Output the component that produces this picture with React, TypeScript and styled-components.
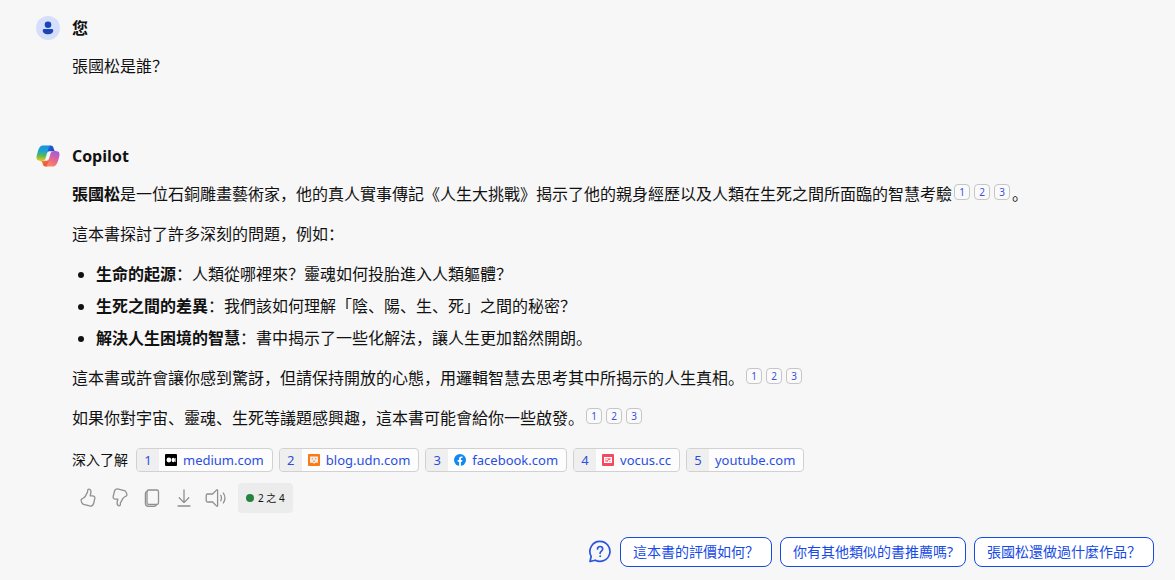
import React from "react";
import styled, { createGlobalStyle } from "styled-components";

const GlobalStyle = createGlobalStyle`
  * { box-sizing: border-box; }
  body {
    margin: 0;
    background: #f7f7f7;
    color: #111;
    font-family: "Noto Sans", "Noto Sans CJK SC", sans-serif;
    font-size: 16px;
    line-height: 24px;
  }
`;

const Page = styled.main`
  padding: 16px 21px 13px 36px;
`;

const Message = styled.article`
  & + & { margin-top: 66px; }
`;

const Author = styled.header`
  display: flex;
  align-items: center;
  gap: 12px;
  height: 24px;
  margin-bottom: 14px;
`;

const AuthorName = styled.h2`
  margin: 0;
  font-family: "Open Sans", "Noto Sans CJK SC", sans-serif;
  font-size: 16px;
  font-weight: 700;
  line-height: 24px;
`;

const Body = styled.div`
  padding-left: 36px;
`;

const Paragraph = styled.p`
  margin: 0 0 16px;
  &:last-child { margin-bottom: 0; }
`;

const List = styled.ul`
  display: flex;
  flex-direction: column;
  gap: 8px;
  margin: 0 0 16px;
  padding-left: 24px;
`;

const CiteGroup = styled.span`
  display: inline-flex;
  gap: 4px;
  height: 16px;
  margin: 0 2px;
  vertical-align: 4px;
`;

const Cite = styled.a`
  display: flex;
  align-items: center;
  justify-content: center;
  width: 16px;
  height: 16px;
  border: 1px solid #c6c6c6;
  border-radius: 4px;
  background: #fafafa;
  color: #3a4fe4;
  font-size: 10px;
  line-height: 14px;
  text-decoration: none;
`;

const Sources = styled.nav`
  display: flex;
  flex-wrap: wrap;
  align-items: center;
  gap: 6px;
  margin-top: 18px;
`;

const SourcesLabel = styled.span`
  margin-right: 2px;
  font-size: 14px;
`;

const Source = styled.a`
  display: flex;
  align-items: stretch;
  height: 24px;
  overflow: hidden;
  border: 1px solid #d1d1d1;
  border-radius: 4px;
  background: #fdfdfd;
  color: #2a4fe0;
  font-size: 13px;
  line-height: 22px;
  text-decoration: none;
`;

const SourceIndex = styled.span`
  width: 22px;
  background: #efefef;
  text-align: center;
`;

const SourceSite = styled.span`
  display: flex;
  align-items: center;
  gap: 6px;
  padding: 0 8px 0 6px;
`;

const Actions = styled.div`
  display: flex;
  align-items: center;
  margin-top: 11px;
`;

const IconButton = styled.button`
  display: flex;
  align-items: center;
  justify-content: center;
  width: 32px;
  height: 30px;
  padding: 0;
  border: 0;
  background: none;
  color: #909090;
`;

const Counter = styled.span`
  display: flex;
  align-items: center;
  gap: 4px;
  height: 30px;
  margin-left: 6px;
  padding: 0 8px;
  border-radius: 4px;
  background: #ececec;
  font-size: 10px;
`;

const Dot = styled.span`
  width: 8px;
  height: 8px;
  border-radius: 50%;
  background: #24833f;
`;

const Suggestions = styled.footer`
  display: flex;
  flex-wrap: wrap;
  align-items: center;
  justify-content: flex-end;
  gap: 8px;
  margin-top: 24px;
`;

const Suggestion = styled.button`
  height: 30px;
  padding: 0 12px;
  border: 1px solid #174ae4;
  border-radius: 8px;
  background: #fff;
  color: #174ae4;
  font: inherit;
  font-size: 14px;
  line-height: 28px;
`;

const UserAvatar = () => (
  <svg width="24" height="24" viewBox="0 0 24 24" aria-hidden="true">
    <circle cx="12" cy="12" r="12" fill="#d5dffb" />
    <circle cx="12" cy="8.700" r="3.300" fill="#1b44b8" />
    <path d="M8.300 13h7.400c.9 0 1.600.7 1.600 1.600 0 2.400-2.400 3.700-5.300 3.700s-5.300-1.300-5.300-3.700c0-.9.7-1.600 1.600-1.600z" fill="#1b44b8" />
  </svg>
);

const CopilotLogo = () => (
  <svg width="24" height="24" viewBox="1 1 46 46" aria-hidden="true">
    <defs>
      <linearGradient id="cpLeft" x1="14" y1="4" x2="12" y2="33" gradientUnits="userSpaceOnUse">
        <stop offset="0" stopColor="#1a8fe8" />
        <stop offset=".4" stopColor="#1fa6c4" />
        <stop offset=".68" stopColor="#5cb955" />
        <stop offset="1" stopColor="#eac91c" />
      </linearGradient>
      <linearGradient id="cpTop" x1="24" y1="6" x2="36" y2="15" gradientUnits="userSpaceOnUse">
        <stop offset="0" stopColor="#1b69e0" />
        <stop offset="1" stopColor="#263fbd" />
      </linearGradient>
      <linearGradient id="cpRight" x1="40" y1="14" x2="28" y2="45" gradientUnits="userSpaceOnUse">
        <stop offset="0" stopColor="#9b5be8" />
        <stop offset=".45" stopColor="#dc609e" />
        <stop offset="1" stopColor="#ff8b58" />
      </linearGradient>
      <linearGradient id="cpBottom" x1="14" y1="33" x2="22" y2="44" gradientUnits="userSpaceOnUse">
        <stop offset="0" stopColor="#f08038" />
        <stop offset="1" stopColor="#e94742" />
      </linearGradient>
    </defs>
    <path d="M34.142 7.325A4.630 4.630 0 0 0 29.700 4h-1.350a4.630 4.630 0 0 0-4.554 3.794L21.480 20.407l.575-1.965a4.630 4.630 0 0 1 4.444-3.330h7.853l3.294 1.282 3.175-1.283h-.926a4.630 4.630 0 0 1-4.443-3.325z" fill="url(#cpTop)" />
    <path d="M14.330 40.656A4.630 4.630 0 0 0 18.779 44h2.870a4.630 4.630 0 0 0 4.629-4.510l.312-12.163-.654 2.233a4.630 4.630 0 0 1-4.443 3.329h-7.919l-2.823-1.532-3.057 1.532h.912a4.630 4.630 0 0 1 4.447 3.344z" fill="url(#cpBottom)" />
    <path d="M29.500 4H13.460c-4.583 0-7.332 6.057-9.165 12.113C2.123 23.290-.720 32.885 7.503 32.885h6.925a4.630 4.630 0 0 0 4.456-3.358 2078 2078 0 0 1 4.971-17.156c.843-2.843 1.544-5.284 2.621-6.805C27.080 4.714 28.086 4 29.500 4z" fill="url(#cpLeft)" />
    <path d="M18.498 44h16.040c4.582 0 7.332-6.058 9.165-12.115 2.171-7.177 5.013-16.775-3.208-16.775h-6.926a4.630 4.630 0 0 0-4.455 3.358 2084 2084 0 0 1-4.972 17.160c-.842 2.842-1.544 5.285-2.620 6.806-.604.852-1.610 1.566-3.024 1.566z" fill="url(#cpRight)" />
  </svg>
);

const lineIcon = {
  width: 22,
  height: 22,
  viewBox: "0 0 22 22",
  fill: "none",
  stroke: "currentColor",
  strokeWidth: 1.3,
  strokeLinecap: "round" as const,
  strokeLinejoin: "round" as const,
  "aria-hidden": true,
};

const thumbPath =
  "M11.900 2.200c1.600.3 2.300 1.700 2 3.300L13.200 8.800h2.300c1.700 0 2.700 1.300 2.300 2.900l-1.200 4.800c-.5 1.900-2.100 2.900-4 2.400l-6-1.600c-.9-.3-1.500-.9-1.800-1.800l-.6-1.300c-.4-1 0-2 1-2.500l1.300-.7c.9-.5 1.500-1.200 2-2.100l2-3.800c.2-.6.1-1.300.2-1.900.1-.7.6-1.100 1.200-1z";

const LikeIcon = () => (
  <svg {...lineIcon}><path d={thumbPath} /></svg>
);

const DislikeIcon = () => (
  <svg {...lineIcon}><path transform="rotate(180 11 10.500)" d={thumbPath} /></svg>
);

const CopyIcon = () => (
  <svg {...lineIcon}>
    <rect x="6" y="3" width="11.500" height="14.500" rx="1.800" />
    <path d="M6 4.300c-1 .3-1.600 1.100-1.600 2.200v9.700c0 1.900 1.200 3.100 3.100 3.100h5.800c1 0 1.700-.5 2.100-1.500" />
  </svg>
);

const DownloadIcon = () => (
  <svg {...lineIcon}><path d="M11 3v12.500M6.200 10.800 11 15.600l4.800-4.800M5 19h12" /></svg>
);

const SpeakerIcon = () => (
  <svg {...lineIcon}>
    <path d="M12.600 3.300v15.400c0 .5-.5.700-.9.400L7.600 15H2.700c-.9 0-1.500-.6-1.500-1.500v-5C1.200 7.600 1.800 7 2.700 7h4.900l4.100-4.100c.4-.3.900-.1.900.4zM15.700 8.300c.9 1.600.9 3.800 0 5.400M18.300 6c2 3 2 7 0 10" />
  </svg>
);

const HelpChatIcon = () => (
  <svg width="24" height="24" viewBox="0 0 24 24" fill="none" stroke="#2a55dd" strokeWidth="1.700" strokeLinecap="round" strokeLinejoin="round" aria-hidden="true">
    <path d="M12 1.400a10 10 0 1 1-4.800 18.800l-5.200 1.300 1.200-5.200A10 10 0 0 1 12 1.400z" />
    <path d="M9.500 9c0-1.500 1.100-2.500 2.600-2.500s2.600 1 2.600 2.500c0 2-2.600 2.200-2.600 4.300" />
    <circle cx="12.100" cy="16.200" r=".5" fill="#2a55dd" strokeWidth="1" />
  </svg>
);

const MediumIcon = () => (
  <svg width="12" height="12" viewBox="0 0 12 12" aria-hidden="true">
    <rect width="12" height="12" rx="1" fill="#000" />
    <circle cx="3.900" cy="6" r="2.400" fill="#fff" />
    <ellipse cx="8.300" cy="6" rx="1.700" ry="2.300" fill="#fff" />
    <rect x="10.400" y="4" width=".6" height="4" fill="#fff" />
  </svg>
);

const UdnIcon = () => (
  <svg width="12" height="12" viewBox="0 0 12 12" aria-hidden="true">
    <rect width="12" height="12" rx="1" fill="#fa7a14" />
    <path d="M2 2.500h8v6.300H7.300L6 9.800 4.700 8.800H2z" fill="#f6ebe2" />
    <path d="M4.300 4v1.300M7.700 4v1.300M5 6.800l1 .7 1-.7" fill="none" stroke="#a58f80" strokeWidth=".9" />
  </svg>
);

const FacebookIcon = () => (
  <svg width="12" height="12" viewBox="0 0 12 12" aria-hidden="true">
    <circle cx="6" cy="6" r="6" fill="#1488ee" />
    <path d="M5.100 12V7.700H3.600V6h1.500V4.700c0-1.500.9-2.300 2.200-2.300l1.200.1V4h-.7c-.7 0-.9.400-.9.900V6h1.500l-.3 1.700H6.900V12z" fill="#fff" />
  </svg>
);

const VocusIcon = () => (
  <svg width="12" height="12" viewBox="0 0 12 12" aria-hidden="true">
    <rect width="12" height="12" rx="1" fill="#f8485e" />
    <rect x="2" y="3" width="8" height="6" fill="#fff" />
    <rect x="3.500" y="4.300" width="5" height="3.400" fill="#f8607a" />
    <rect x="4" y="4.800" width="1.800" height="1.400" fill="#fff" />
    <path d="M6.500 9V6.500H10" fill="none" stroke="#fff" />
  </svg>
);

const sources = [
  { site: "medium.com", icon: <MediumIcon /> },
  { site: "blog.udn.com", icon: <UdnIcon /> },
  { site: "facebook.com", icon: <FacebookIcon /> },
  { site: "vocus.cc", icon: <VocusIcon /> },
  { site: "youtube.com", icon: null },
];

const actions = [
  { label: "喜歡", icon: <LikeIcon /> },
  { label: "不喜歡", icon: <DislikeIcon /> },
  { label: "複製", icon: <CopyIcon /> },
  { label: "匯出", icon: <DownloadIcon /> },
  { label: "朗讀", icon: <SpeakerIcon /> },
];

const suggestions = ["這本書的評價如何？", "你有其他類似的書推薦嗎?", "張國松還做過什麼作品？"];

const Citations = () => (
  <CiteGroup>
    {[1, 2, 3].map((n) => (
      <Cite key={n} href={`#source-${n}`}>{n}</Cite>
    ))}
  </CiteGroup>
);

export default function App() {
  return (
    <Page lang="zh-Hans">
      <GlobalStyle />
      <Message>
        <Author>
          <UserAvatar />
          <AuthorName>您</AuthorName>
        </Author>
        <Body>
          <Paragraph>張國松是誰？</Paragraph>
        </Body>
      </Message>
      <Message>
        <Author>
          <CopilotLogo />
          <AuthorName>Copilot</AuthorName>
        </Author>
        <Body>
          <Paragraph>
            <strong>張國松</strong>是一位石銅雕畫藝術家，他的真人實事傳記《人生大挑戰》揭示了他的親身經歷以及人類在生死之間所面臨的智慧考驗<Citations />。
          </Paragraph>
          <Paragraph>這本書探討了許多深刻的問題，例如：</Paragraph>
          <List>
            <li><strong>生命的起源</strong>：人類從哪裡來？靈魂如何投胎進入人類軀體？</li>
            <li><strong>生死之間的差異</strong>：我們該如何理解「陰、陽、生、死」之間的秘密？</li>
            <li><strong>解決人生困境的智慧</strong>：書中揭示了一些化解法，讓人生更加豁然開朗。</li>
          </List>
          <Paragraph>
            這本書或許會讓你感到驚訝，但請保持開放的心態，用邏輯智慧去思考其中所揭示的人生真相。<Citations />
          </Paragraph>
          <Paragraph>
            如果你對宇宙、靈魂、生死等議題感興趣，這本書可能會給你一些啟發。<Citations />
          </Paragraph>
          <Sources aria-label="深入了解">
            <SourcesLabel>深入了解</SourcesLabel>
            {sources.map((source, i) => (
              <Source key={source.site} id={`source-${i + 1}`} href={`#${source.site}`}>
                <SourceIndex>{i + 1}</SourceIndex>
                <SourceSite>
                  {source.icon}
                  {source.site}
                </SourceSite>
              </Source>
            ))}
          </Sources>
          <Actions>
            {actions.map((action) => (
              <IconButton key={action.label} type="button" aria-label={action.label}>
                {action.icon}
              </IconButton>
            ))}
            <Counter><Dot />2 之 4</Counter>
          </Actions>
        </Body>
      </Message>
      <Suggestions>
        <HelpChatIcon />
        {suggestions.map((text) => (
          <Suggestion key={text} type="button">{text}</Suggestion>
        ))}
      </Suggestions>
    </Page>
  );
}
